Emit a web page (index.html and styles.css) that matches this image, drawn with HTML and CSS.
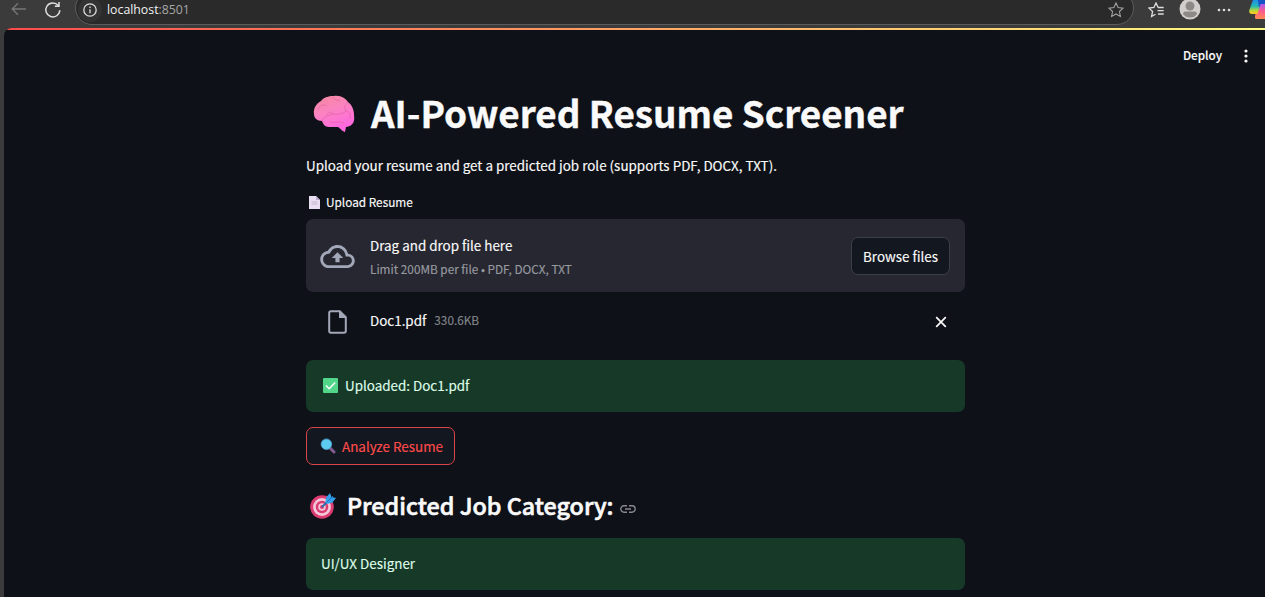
FILE: index.html
```html
<!DOCTYPE html>
<html lang="en">
<head>
<meta charset="utf-8">
<title>AI-Powered Resume Screener</title>
<link rel="stylesheet" href="styles.css">
</head>
<body>
<div class="browser">
  <svg class="back" width="16" height="14" viewBox="0 0 16 14"><path d="M15 7H1.5M7 1.2L1.2 7L7 12.8"/></svg>
  <svg class="reload" width="18" height="18" viewBox="0 0 18 18"><path d="M15.8 9.3A7 7 0 1 1 14.3 4.6M15 1V5.2H10.8"/></svg>
  <div class="address">
    <span class="info"><svg width="14" height="14" viewBox="0 0 14 14"><circle cx="7" cy="7" r="6.2"/><path d="M7 6.3V10.2M7 3.6V4.9"/></svg></span>
    <span class="url">localhost<span class="port">:8501</span></span>
    <svg class="star" width="16" height="16" viewBox="0 0 16 16"><path d="M8 1L10.1 5.5L15 6.1L11.4 9.5L12.4 14.5L8 12L3.6 14.5L4.6 9.5L1 6.1L5.9 5.5Z"/></svg>
  </div>
  <svg class="favs" width="17" height="16" viewBox="0 0 17 16"><path d="M9.5 5.2H10L8 1L5.9 5.5L1 6.1L4.6 9.5L3.6 14.5L7.5 12.3M10 5.5H15.7M9.5 8.7H15.7M10 12H15.7"/></svg>
  <svg class="avatar" width="22" height="22" viewBox="0 0 22 22"><circle cx="11" cy="11" r="10.5" fill="#d2cecb"/><circle cx="11" cy="8" r="4.5" fill="#8d8987"/><path d="M4 16Q4 13.5 6.5 13.5H15.5Q18 13.5 18 16Q15.5 19.5 11 19.5T4 16Z" fill="#8d8987"/></svg>
  <svg class="more" width="14" height="4" viewBox="0 0 14 4"><circle cx="2" cy="2" r="1.3"/><circle cx="7" cy="2" r="1.3"/><circle cx="12" cy="2" r="1.3"/></svg>
  <svg class="copilot" width="16" height="20" viewBox="0 0 16 20">
    <defs>
      <linearGradient id="cl" x1="0" y1="0" x2="0" y2="1"><stop offset="0" stop-color="#1c8ee8"/><stop offset=".45" stop-color="#27b9b2"/><stop offset=".75" stop-color="#b8d63a"/><stop offset="1" stop-color="#ffc41f"/></linearGradient>
      <linearGradient id="cr" x1="0" y1="0" x2="0" y2="1"><stop offset="0" stop-color="#a45cf0"/><stop offset=".5" stop-color="#ff5c8a"/><stop offset="1" stop-color="#ff8b50"/></linearGradient>
    </defs>
    <path d="M4 0H14L9.5 14H4Q-.8 14 .4 10Z" fill="url(#cl)"/>
    <path d="M9 0H16V4H12L10 8Z" fill="#1652c8"/>
    <path d="M11.5 4H16V19H7.5Q5 19 6.5 14H8.5Z" fill="url(#cr)"/>
  </svg>
</div>
<div class="app">
  <div class="toolbar">
    <span class="deploy">Deploy</span>
    <svg width="4" height="14" viewBox="0 0 4 14" fill="#fafafa"><circle cx="2" cy="2" r="1.6"/><circle cx="2" cy="7" r="1.6"/><circle cx="2" cy="12" r="1.6"/></svg>
  </div>
  <main class="column">
    <h1 class="title">
      <svg class="brain" width="42" height="38" viewBox="0 0 42 38">
        <defs><linearGradient id="br" x1="0" y1="0" x2=".4" y2="1"><stop offset="0" stop-color="#f58a9c"/><stop offset=".5" stop-color="#fb82c2"/><stop offset="1" stop-color="#ff68df"/></linearGradient></defs>
        <path d="M1 19C0 13 4 8 8 6C12 1 18 1 21 1C28 0 33 4 35 7C39 10 41 15 41 20C42 27 40 31 33 32L32 37C30 37 27 33 25 32H16C12 32 10 29 9 26C4 26 1 23 1 19Z" fill="url(#br)"/>
        <path d="M20 2C21 5 24 6 27 5M35 8C31 10 31 13 33 16M5 15C6 10 10 9 14 11M9 26C11 21 15 21 20 19C26 20 31 18 33 16M20 19C17 16 15 17 14 20M33 16C37 17 38 20 37 24M17 27C22 28 27 26 31 28" fill="none" stroke="#d95c9e" stroke-width="1" stroke-opacity=".55"/>
      </svg>
      <span>AI-Powered Resume Screener</span>
    </h1>
    <p class="intro">Upload your resume and get a predicted job role (supports PDF, DOCX, TXT).</p>
    <div class="label">
      <svg width="11" height="13" viewBox="0 0 11 13"><path d="M0 0H7L11 4V13H0Z" fill="#e9def2"/><path d="M7 0V4H11Z" fill="#bba9cf"/><path d="M2.5 6H8.5M2.5 8H8.5" stroke="#b9adc6" stroke-width=".8"/></svg>
      <span>Upload Resume</span>
    </div>
    <section class="dropzone">
      <svg class="cloud" width="35" height="23" viewBox="0 0 24 16" fill="#a3a8b8"><path d="M19.35 6.04A7.49 7.49 0 0 0 12 0C9.11 0 6.6 1.64 5.35 4.04A5.994 5.994 0 0 0 0 10c0 3.31 2.69 6 6 6h13c2.76 0 5-2.24 5-5 0-2.64-2.05-4.78-4.65-4.96zM19 14H6c-2.21 0-4-1.79-4-4 0-2.05 1.53-3.76 3.56-3.97l1.07-.11.5-.95A5.469 5.469 0 0 1 12 2c2.62 0 4.88 1.86 5.39 4.43l.3 1.5 1.53.11A2.98 2.98 0 0 1 22 11c0 1.65-1.35 3-3 3zM8 9h2.55v3h2.9V9H16l-4-4z"/></svg>
      <div class="hint">
        <span class="drag">Drag and drop file here</span>
        <span class="limit">Limit 200MB per file • PDF, DOCX, TXT</span>
      </div>
      <button class="browse">Browse files</button>
    </section>
    <div class="file">
      <svg class="doc" width="19" height="24" viewBox="0 0 19 24"><path d="M3 1.2H11.8L17.8 7.2V21Q17.8 22.8 16 22.8H3Q1.2 22.8 1.2 21V3Q1.2 1.2 3 1.2Z" fill="none" stroke="#a3a8b8" stroke-width="2"/><path d="M11 1V8H18Z" fill="#a3a8b8"/></svg>
      <span class="name">Doc1.pdf</span>
      <span class="size">330.6KB</span>
      <svg class="close" width="12" height="12" viewBox="0 0 12 12"><path d="M1.2 1.2L10.8 10.8M10.8 1.2L1.2 10.8"/></svg>
    </div>
    <div class="alert uploaded">
      <svg width="15" height="15" viewBox="0 0 15 15"><rect width="15" height="15" rx="1" fill="#52d68a"/><path d="M3 7.5L6.2 10.7L12.2 4.5" fill="none" stroke="#fff" stroke-width="1.5"/></svg>
      <span>Uploaded: Doc1.pdf</span>
    </div>
    <button class="analyze">
      <svg width="16" height="16" viewBox="0 0 16 16"><path d="M9.8 9.8L14 14" stroke="#865b91" stroke-width="3" stroke-linecap="round"/><circle cx="6.4" cy="6.2" r="5.3" fill="#5ccdf0" stroke="#4a9ccc" stroke-width=".8"/></svg>
      <span>Analyze Resume</span>
    </button>
    <h2 class="heading">
      <svg class="target" width="27" height="27" viewBox="0 0 27 27"><circle cx="12" cy="15" r="11.8" fill="#dc3b70"/><circle cx="12" cy="15" r="8.9" fill="#f3c7d9"/><circle cx="12" cy="15" r="6.2" fill="#dc3b70"/><circle cx="12" cy="15" r="3.8" fill="#f3c7d9"/><circle cx="12" cy="15" r="2" fill="#dc3b70"/><path d="M12 15L19 8" stroke="#246fae" stroke-width="1.8"/><path d="M15.5 10.5L16 5.5L20 1L21.5 5L26 6L22 11L17 11.8Z" fill="#349ee8"/><path d="M17 10L23 4" stroke="#1976c0"/></svg>
      <span class="heading-text">Predicted Job Category:</span>
      <svg class="link" width="16" height="8" viewBox="0 0 16 8"><path d="M7 .8H4A3.2 3.2 0 0 0 4 7.2H7M9 .8H12A3.2 3.2 0 0 1 12 7.2H9M5 4H11"/></svg>
    </h2>
    <div class="alert">
      <span>UI/UX Designer</span>
    </div>
  </main>
</div>
</body>
</html>
```
FILE: styles.css
```css
* { box-sizing: border-box; }
body {
  margin: 0;
  width: 1265px;
  height: 597px;
  overflow: hidden;
  background: #3b3b3b;
  color: #fafafa;
  font-family: "Noto Sans CJK JP", "Noto Sans", sans-serif;
  font-size: 13.42px;
  line-height: 20px;
}
svg { display: block; flex: none; }
span { white-space: nowrap; }
h1, h2, p { margin: 0; }
button { font: inherit; color: inherit; padding: 0; }

.browser { display: flex; height: 28px; overflow: hidden; }
.browser svg { fill: none; stroke: #dedede; stroke-width: 1.3; }
.browser .back { margin: 2px 0 0 11px; stroke: #777; }
.browser .reload { margin: 1px 0 0 17px; stroke-width: 1.5; }
.address {
  display: flex;
  align-items: center;
  width: 1059px;
  height: 34px;
  margin: -9px 0 0 13px;
  padding: 3px 9px 0 2px;
  border: 1px solid #5c5c5c;
  border-radius: 17px;
  background: #2a2a2a;
}
.info { display: grid; place-items: center; width: 24px; height: 24px; border-radius: 50%; background: #333; }
.url { margin-left: 5px; font: 12.3px/20px "Open Sans", "Noto Sans", sans-serif; color: #f2f2f2; }
.port { color: #a6a6a6; }
.browser .star { margin-left: auto; stroke: #a0a0a0; stroke-width: 1.1; }
.browser .favs { margin: 2px 0 0 14px; }
.browser .avatar { margin: -2px 0 0 14px; stroke: none; }
.browser .more { margin: 8px 0 0 16px; fill: #dedede; stroke: none; }
.browser .copilot { margin: 0 0 0 18px; stroke: none; }

.app { height: 569px; margin-left: 4px; border-radius: 8px 0 0 0; background: #0e1117; overflow: hidden; -webkit-text-stroke: .15px currentColor; }
.app::before { content: ""; display: block; height: 2px; background: linear-gradient(90deg, #ff4b4b, #fffd80); }
.toolbar { display: flex; align-items: center; justify-content: flex-end; gap: 22px; height: 52px; padding-right: 17px; }
.deploy { margin-top: -2px; font-size: 11.7px; font-weight: 500; }
.column { display: flex; flex-direction: column; width: 659px; margin-left: 302px; }

.title { display: flex; align-items: center; height: 64px; padding: 0 0 4px 7px; font-size: 36.85px; font-weight: 700; line-height: 60px; -webkit-text-stroke: .4px currentColor; }
.brain { margin: 4px 16px 0 0; }
.intro { height: 40px; line-height: 38px; white-space: nowrap; }
.label { display: flex; align-items: center; gap: 6px; height: 33px; padding: 0 0 1px 3px; font-size: 11.8px; }
.dropzone { display: flex; align-items: center; height: 73px; padding: 0 15px 0 14px; border-radius: 7px; background: #262730; }
.cloud { margin-top: 1px; }
.hint { display: flex; flex-direction: column; gap: 4px; margin: 2px 0 0 15px; }
.limit { font-size: 11.78px; color: #989aa0; }
.browse { width: 99px; height: 38px; margin-left: auto; border: 1px solid #3c3e47; border-radius: 7px; background: #131720; }
.file { display: flex; align-items: center; height: 60px; padding: 0 18px 0 22px; }
.name { margin: -5px 0 0 23px; }
.size { margin: -4px 0 0 8px; font-size: 11.78px; color: #83868c; }
.close { margin-left: auto; fill: none; stroke: #fafafa; stroke-width: 1.7; }
.alert { display: flex; align-items: center; height: 52px; padding: 0 15px 2px; border-radius: 7px; background: #173928; color: #dffde9; }
.uploaded { gap: 7px; margin-top: 8px; padding-left: 17px; }
.analyze { display: flex; align-items: center; gap: 6px; width: 149px; height: 38px; margin-top: 15px; padding-left: 13px; border: 1px solid #d9464a; border-radius: 7px; background: #131720; color: #ff4b4b; }
.heading { display: flex; align-items: center; height: 73px; padding: 8px 0 0 4px; font-size: 23.3px; font-weight: 500; line-height: 40px; -webkit-text-stroke: .6px currentColor; }
.heading-text { margin: -2px 0 0 10px; }
.link { margin: 7px 0 0 6px; fill: none; stroke: #85888e; stroke-width: 1.4; }
```
